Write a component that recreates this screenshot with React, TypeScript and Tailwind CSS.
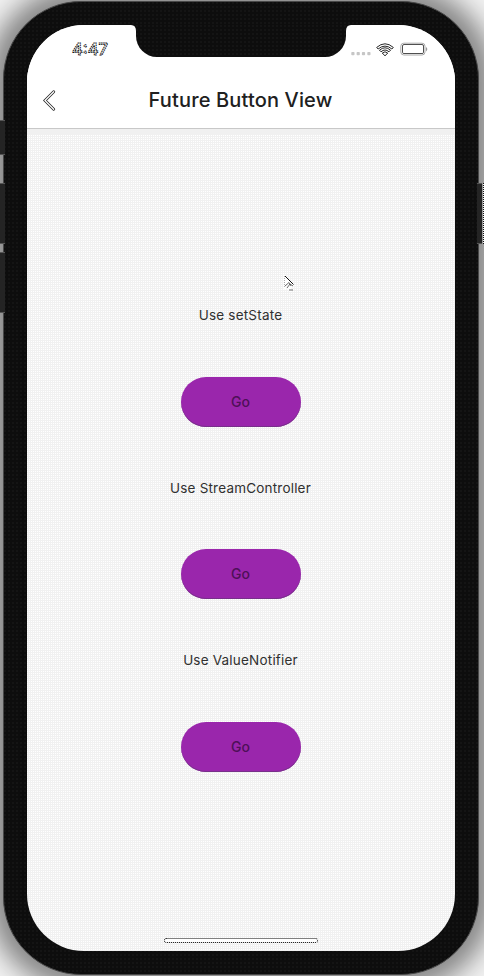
const dither =
  "bg-[#f1f1f1] bg-[radial-gradient(circle_at_0.5px_0.5px,#ffffff_0.7px,transparent_0.8px)] bg-[length:2px_2px]";

const bezel =
  "bg-[#0d0d0d] bg-[radial-gradient(circle_at_1px_1px,#1c1c1c_0.6px,transparent_0.8px)] bg-[length:4px_4px]";

const inter = "font-['Inter','Liberation_Sans',sans-serif]";

function StatusBar() {
  return (
    <div className="flex h-[46px] shrink-0 items-start">
      <div className="flex w-[109px] shrink-0 justify-start pl-[45px] pt-[15px]">
        <svg width="40" height="20" viewBox="0 0 40 20" className="overflow-visible">
          <text
            x="0"
            y="15"
            fontSize="16.5"
            fontWeight="500"
            fontFamily="Inter, Liberation Sans, sans-serif"
            fill="#fff"
            stroke="#000"
            strokeWidth="0.9"
            strokeDasharray="1.6 0.6"
            textLength="36"
          >
            4:47
          </text>
        </svg>
      </div>
      <div className={`relative h-8 w-[210px] shrink-0 rounded-b-[21px] ${bezel}`}>
        <svg className="absolute -left-[5px] top-0" width="5" height="6" viewBox="0 0 5 6">
          <path d="M0 0H5V6Q5 0 0 0Z" fill="#0d0d0d" />
        </svg>
        <svg className="absolute -right-[5px] top-0" width="5" height="6" viewBox="0 0 5 6">
          <path d="M5 0H0V6Q0 0 5 0Z" fill="#0d0d0d" />
        </svg>
      </div>
      <div className="flex flex-1 items-start pl-[5px] pt-[17px]">
        <svg width="20" height="14" viewBox="0 0 20 14">
          {[0, 5.3, 10.6, 16].map((x) => (
            <rect key={x} x={x + 0.3} y="10" width="3.2" height="3.2" rx="0.8" fill="#c6c6c6" />
          ))}
        </svg>
        <svg className="ml-[5px] mt-px" width="18" height="14" viewBox="0 0 18 14" fill="none" stroke="#111" strokeWidth="0.9">
          <path d="M.7 4.4Q9-2.8 17.3 4.4L15.9 6Q9 .2 2.1 6Z" />
          <path d="M3.5 7.2Q9 2.4 14.5 7.2L13 8.8Q9 5.2 5 8.8Z" />
          <path d="M6.3 10Q9 7.6 11.7 10L9 12.9Z" />
        </svg>
        <svg className="ml-[6px]" width="29" height="14" viewBox="0 0 29 14" fill="none">
          <rect x=".8" y="1.2" width="24.2" height="11.8" rx="3" stroke="#aaa" strokeWidth="1" />
          <path d="M2.5 4V10.5Q2.5 11.5 4 11.5H22Q23.5 11.5 23.5 10.5V4Q23.5 2.5 22 2.5H4Q2.5 2.5 2.5 4Z" stroke="#222" strokeWidth=".8" />
          <path d="M26 5V9.4Q28.6 7.2 26 5Z" fill="#999" />
        </svg>
      </div>
    </div>
  );
}

function Section({ label }: { label: string }) {
  return (
    <section className="flex h-[172.5px] flex-col items-center">
      <p className="h-5 text-[13.5px] leading-5 tracking-[0.2px] text-[#303030]">{label}</p>
      <button className="mt-[51.6px] h-[50px] w-[120px] rounded-[25px] bg-[#9a26ac] pb-[0.6px] text-[14px] font-medium text-[#4e1058] shadow-[inset_0_-1px_0_#78308a]">
        Go
      </button>
    </section>
  );
}

function SideKey({ className }: { className: string }) {
  return <div className={`w-[5px] border-y border-[#555] bg-[#242424] ${className}`} />;
}

export default function App() {
  return (
    <div className={`relative h-[976px] w-[484px] overflow-hidden bg-[#f2f2f2] pl-[3px] pt-px ${inter}`}>
      <div className={`h-[974px] w-[476px] rounded-[78px] border-[1.5px] border-[#484848] ${bezel} pl-[22.5px] pt-[22.5px] shadow-[0_0_26px_15px_rgba(0,0,0,0.45)]`}>
        <div className={`flex h-[926px] w-[428px] flex-col overflow-hidden rounded-[57px] ${dither}`}>
          <header className="h-[104px] shrink-0 border-b border-[#c8c8c8] bg-white shadow-[0_6px_0_#f0f0f0]">
            <StatusBar />
            <div className="grid h-[59px] grid-cols-[44px_1fr_44px] items-center">
              <svg className="ml-[15px]" width="14" height="21" viewBox="0 0 14 21" fill="none">
                <path d="M11.7 1.7L3 10.5L11.7 19.3" stroke="#222" strokeWidth="2.8" strokeLinecap="round" />
                <path d="M11.7 1.7L3 10.5L11.7 19.3" stroke="#fff" strokeWidth="1.3" strokeLinecap="round" />
              </svg>
              <h1 className="text-center text-[20px] font-medium leading-7 tracking-[0.15px] text-[#202020]">
                Future Button View
              </h1>
            </div>
          </header>
          <main className="flex flex-1 flex-col pt-[176.6px]">
            <Section label="Use setState" />
            <Section label="Use StreamController" />
            <Section label="Use ValueNotifier" />
          </main>
          <div className="mb-[8px] flex shrink-0 justify-center">
            <div className="h-[5px] w-[154px] rounded-full border border-dotted border-black bg-white" />
          </div>
        </div>
      </div>
      <SideKey className="absolute left-0 top-[120px] h-[35px]" />
      <SideKey className="absolute left-0 top-[183px] h-[61px]" />
      <SideKey className="absolute left-0 top-[252px] h-[61px]" />
      <SideKey className="absolute left-[477px] top-[183px] h-[61px]" />
      <div className="absolute left-[483px] top-[183px] h-[61px] w-px bg-[repeating-linear-gradient(0deg,#111_0_1px,#eee_1px_2px)]" />
      <svg className="absolute left-[282px] top-[273px]" width="14" height="20" viewBox="0 0 14 20" fill="none">
        <path d="M1.5 1L13 13L8.5 14L10.5 18.5L7.5 19L5 15L1.5 17Z" fill="#fff" />
        <path d="M3 3L11.5 11.5" stroke="#111" strokeWidth="1" />
        <path d="M2.5 3V15" stroke="#999" strokeWidth=".8" strokeDasharray="1 1" />
        <path d="M3 13L7 9.5L9 13M5 15L8 11L11 13M7 17H11" stroke="#444" strokeWidth=".8" />
      </svg>
    </div>
  );
}
